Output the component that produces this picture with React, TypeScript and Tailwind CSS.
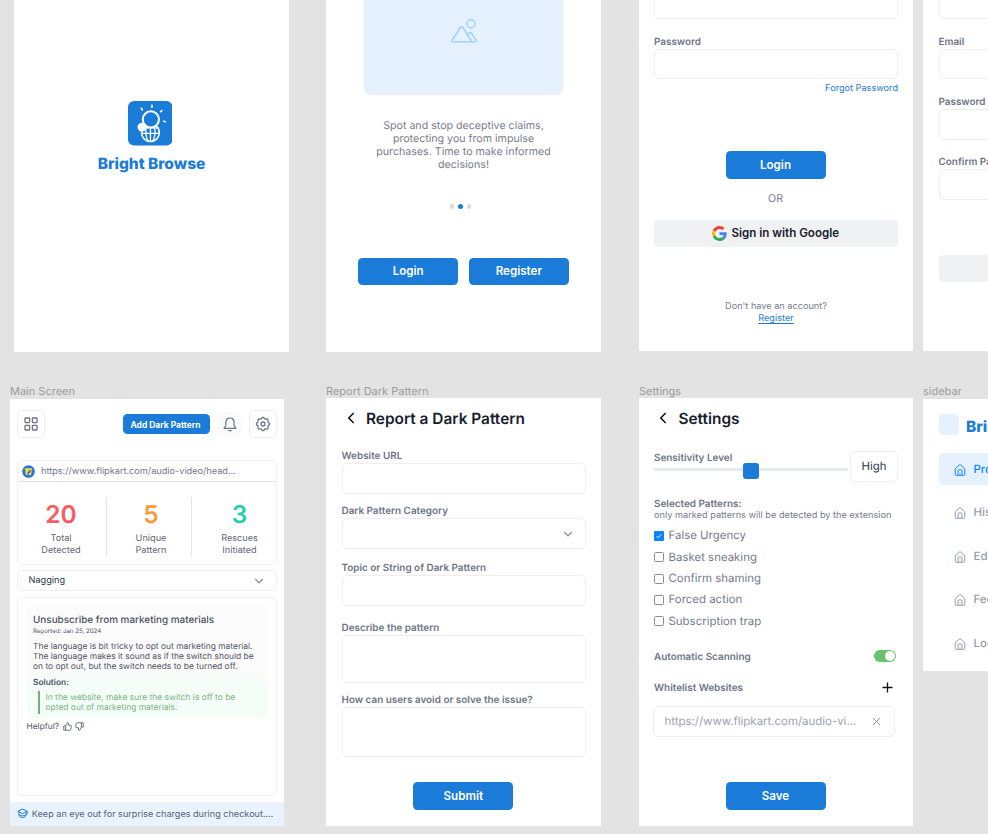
import React from "react";
import type { ReactNode } from "react";

function Title({ children }: { children: ReactNode }) {
  return <div className="h-[14px] whitespace-nowrap text-[11px] leading-[15px] text-[#9b9b9b]">{children}</div>;
}

function Label({ children, className = "" }: { children: ReactNode; className?: string }) {
  return (
    <div className={`h-3 shrink-0 whitespace-nowrap text-[9.92px] leading-[14px] font-semibold text-[#6e7585] ${className}`}>
      {children}
    </div>
  );
}

function Field({ className = "h-[30px]", children }: { className?: string; children?: ReactNode }) {
  return <div className={`shrink-0 rounded-[5px] border border-[#eeeef0] bg-white ${className}`}>{children}</div>;
}

function Button({ children, className = "" }: { children: ReactNode; className?: string }) {
  return (
    <button
      className={`flex h-[27.5px] w-[100px] shrink-0 items-center justify-center rounded-[4.5px] bg-[#1a7bd9] pt-px text-[11.6px] font-semibold text-white ${className}`}
    >
      {children}
    </button>
  );
}

function Logo() {
  return (
    <svg viewBox="0 0 44 44" className="mr-[3px] h-[44.5px] w-[44.5px]" fill="none" stroke="#fff">
      <rect width="44" height="44" rx="6" fill="#1a7bd9" stroke="none" />
      <g strokeWidth="1.6" strokeLinecap="round">
        <path d="M23.7 4.2v2" />
        <path d="M13.2 7.2l.9 1.5" />
        <path d="M32.3 10.6l1.2-1.1" />
        <path d="M35.2 20.1l1.6.4" />
      </g>
      <circle cx="22.2" cy="31.2" r="8.8" strokeWidth="1.6" />
      <path d="M14 26.6h16.500M13.500 32h17.400M22.200 26v14M18.400 25c-1.300 5-1 10.500 1.600 14.600M26 25c1.300 5 1 10.500-1.600 14.600" strokeWidth="1.3" />
      <circle cx="22.600" cy="18.200" r="8" fill="#1a7bd9" strokeWidth="2" />
      <circle cx="13.700" cy="25.800" r="4.300" fill="#fff" stroke="none" />
    </svg>
  );
}

function PictureIcon() {
  return (
    <svg viewBox="0 0 26 24" className="h-6 w-[26px]" fill="none" stroke="#9bd0ff" strokeWidth="1.400" strokeLinejoin="round">
      <circle cx="20" cy="4.700" r="4" />
      <path d="M1.200 21.200 9.300 8.500c.7-1.100 2-1.100 2.700 0L20.700 22.600M1.200 21.200c-.5.900 0 1.600.9 1.600h21.600c1.200 0 1.700-.9 1.100-1.800l-4.300-6.900c-.6-1-1.900-1-2.500 0l-1 1.700" />
    </svg>
  );
}

function GoogleIcon() {
  return (
    <svg viewBox="0 0 48 48" className="-mt-px h-[15px] w-[15px]">
      <path fill="#EA4335" d="M24 9.500c3.540 0 6.710 1.220 9.210 3.600l6.850-6.850C35.900 2.380 30.470 0 24 0 14.620 0 6.510 5.380 2.560 13.220l7.980 6.190C12.430 13.720 17.740 9.500 24 9.500z" />
      <path fill="#4285F4" d="M46.980 24.550c0-1.570-.15-3.090-.38-4.550H24v9.020h12.940c-.58 2.960-2.260 5.480-4.780 7.180l7.730 6c4.510-4.180 7.090-10.360 7.090-17.650z" />
      <path fill="#FBBC05" d="M10.530 28.590c-.48-1.450-.76-2.990-.76-4.590s.27-3.140.76-4.590l-7.980-6.190C.92 16.460 0 20.120 0 24c0 3.880.92 7.540 2.560 10.780l7.970-6.190z" />
      <path fill="#34A853" d="M24 48c6.480 0 11.930-2.130 15.890-5.810l-7.730-6c-2.150 1.450-4.920 2.300-8.160 2.300-6.260 0-11.570-4.220-13.470-9.910l-7.980 6.190C6.510 42.620 14.620 48 24 48z" />
    </svg>
  );
}

function GridIcon() {
  return (
    <svg viewBox="0 0 14 14" className="h-[14px] w-[14px]" fill="none" stroke="#6c7484" strokeWidth="1.300">
      <rect x="1" y="1" width="4.600" height="4.600" rx=".5" />
      <rect x="8.400" y="1" width="4.600" height="4.600" rx=".5" />
      <rect x="1" y="8.400" width="4.600" height="4.600" rx=".5" />
      <rect x="8.400" y="8.400" width="4.600" height="4.600" rx=".5" />
    </svg>
  );
}

function BellIcon() {
  return (
    <svg viewBox="0 0 14 15" className="h-[15px] w-[14px]" fill="none" stroke="#6c7484" strokeWidth="1.200" strokeLinejoin="round" strokeLinecap="round">
      <path d="M7 1C4.500 1 2.900 2.900 2.900 5.200v2.700c0 .7-.3 1.200-.7 1.700L1 11.300h12l-1.200-1.700c-.4-.5-.7-1-.7-1.700V5.200C11.100 2.900 9.500 1 7 1z" />
      <path d="M5.800 13.600h2.400" />
    </svg>
  );
}

// Outline of a gear with eight rounded teeth, centred in a 24 unit box.
const gearPath =
  Array.from({ length: 96 }, (_, i) => {
    const a = (i / 96) * Math.PI * 2;
    const r = 9 + 1 * Math.tanh(1.8 * Math.cos(8 * a));
    return `${i ? "L" : "M"}${(12 + r * Math.cos(a)).toFixed(2)} ${(12 + r * Math.sin(a)).toFixed(2)}`;
  }).join("") + "z";

function GearIcon() {
  return (
    <svg viewBox="0 0 24 24" className="h-[16px] w-[16px]" fill="none" stroke="#6c7484" strokeWidth="1.900" strokeLinejoin="round">
      <path d={gearPath} />
      <circle cx="12" cy="12" r="3" />
    </svg>
  );
}

function StoreIcon() {
  return (
    <svg viewBox="0 0 13 13" className="h-[13px] w-[13px]">
      <circle cx="6.500" cy="6.500" r="6.300" fill="#2a70e8" />
      <path d="M3 3.200h6.900l-.7 6.700H3.800z" fill="#f7df2b" />
      <path d="M6 9.900c.2-2.700.8-4.200 2.900-4.300M5.400 7.700h2.600" stroke="#2668bd" strokeWidth="1.100" fill="none" />
    </svg>
  );
}

function ChevronDown() {
  return (
    <svg viewBox="0 0 10 6" className="h-[6px] w-[10px]" fill="none" stroke="#8b93a3" strokeWidth="1.300">
      <path d="M1.200 1 5 4.800 8.800 1" />
    </svg>
  );
}

function BackIcon() {
  return (
    <svg viewBox="0 0 8 12" className="h-3 w-2" fill="none" stroke="#111" strokeWidth="1.500">
      <path d="M6.700 1 1.700 6l5 5" />
    </svg>
  );
}

function ThumbIcon({ down = false }: { down?: boolean }) {
  return (
    <svg viewBox="0 0 24 24" className={`h-[9px] w-[9px] ${down ? "-scale-100" : ""}`} fill="none" stroke="#5b6070" strokeWidth="2.300" strokeLinejoin="round">
      <path d="M2 10.500h5V22H2zM7 10.500l4.500-9C13.500 1.500 15 3 15 5v4h5.500c1.300 0 2 1 1.800 2.200L20.800 20c-.2 1.200-1.100 2-2.300 2H7" />
    </svg>
  );
}

function CapIcon() {
  return (
    <svg viewBox="0 0 11 11" className="-mt-px h-[11px] w-[11px]" fill="none" stroke="#1a7bd9" strokeWidth="1" strokeLinejoin="round">
      <path d="M5.500 1 .8 3.300l4.700 2.400 4.700-2.400zM2 4.300v3.500c1 1.200 2.100 1.800 3.500 1.800S8 9 9 7.800V4.300M2.500 7c2 1.200 4 1.200 6 0M10.200 3.300v3" />
    </svg>
  );
}

function HomeIcon() {
  return (
    <svg viewBox="0 0 12 12" className="h-3 w-3 shrink-0" fill="none" stroke="currentColor" strokeWidth="1" strokeLinejoin="round">
      <path d="M1.200 4.900 5.100 1.100c.5-.4 1.300-.4 1.800 0l3.900 3.800v5.400c0 .6-.4 1-1 1H2.200c-.6 0-1-.4-1-1z" />
      <path d="M4 11.300V6.400c0-.3.200-.5.500-.5h3c.3 0 .5.200.5.500v4.900" />
      <path d="M6 8v3" strokeWidth=".6" opacity=".6" />
    </svg>
  );
}

function SplashScreen() {
  return (
    <section className="flex h-[351.500px] w-[275px] shrink-0 flex-col items-center bg-white pt-[101px]">
      <Logo />
      <h1 className="mt-[8.300px] h-5 text-[15.500px] leading-5 font-extrabold text-[#1a7bd9]">Bright Browse</h1>
    </section>
  );
}

function OnboardingScreen() {
  return (
    <section className="ml-[37px] flex h-[351.500px] w-[275px] shrink-0 flex-col items-center bg-white">
      <div className="flex h-[95px] w-[198.500px] shrink-0 justify-center rounded-b-[6px] bg-[#e5f1ff] pt-[18.500px]">
        <PictureIcon />
      </div>
      <p className="mt-[25px] text-center text-[10.650px] leading-[12.940px] whitespace-nowrap text-[#767c89]">
        Spot and stop deceptive claims,<br />protecting you from impulse<br />purchases. Time to make informed<br />decisions!
      </p>
      <div className="mt-[32.700px] mr-[6px] flex gap-[4px]">
        <i className="size-[4.500px] rounded-full bg-[#d9d9d9]" />
        <i className="size-[4.500px] rounded-full bg-[#1a7bd9]" />
        <i className="size-[4.500px] rounded-full bg-[#d9d9d9]" />
      </div>
      <div className="mt-[49px] flex gap-[10.700px]">
        <Button>Login</Button>
        <Button>Register</Button>
      </div>
    </section>
  );
}

function LoginScreen() {
  return (
    <section className="ml-[38px] flex h-[351px] w-[274px] shrink-0 flex-col bg-white pr-4 pl-[15px]">
      <Field className="h-[19px] w-[244px] rounded-t-none border-t-0" />
      <Label className="mt-[15.500px]">Password</Label>
      <Field className="mt-[2.500px] h-[30px] w-[244px]" />
      <a className="mt-[3px] h-3 w-[244px] text-right text-[9.160px] leading-[14px] text-[#1a7bd9]">Forgot Password</a>
      <Button className="mt-[57px] self-center">Login</Button>
      <div className="mt-[13px] h-[14px] text-center text-[10.690px] leading-[14px] text-[#767c89]">OR</div>
      <button className="mt-[14.500px] flex h-[27px] w-[244px] items-center justify-center gap-[4.500px] rounded-[4.500px] bg-[#f0f1f3] pt-px pr-px text-[11.600px] font-semibold text-[#171c2e]">
        <GoogleIcon />
        Sign in with Google
      </button>
      <p className="mt-[54px] w-[244px] text-center text-[9.160px] leading-[11.500px] text-[#767c89]">
        Don't have an account?<br />
        <a className="text-[#1a7bd9] underline underline-offset-[1.500px]">Register</a>
      </p>
    </section>
  );
}

function RegisterScreen() {
  return (
    <section className="ml-[10px] flex h-[351px] w-[275px] shrink-0 flex-col bg-white pl-[15.500px]">
      <Field className="h-[19px] w-[244px] rounded-t-none border-t-0" />
      <Label className="mt-[15.500px]">Email</Label>
      <Field className="mt-[2.500px] h-[30px] w-[244px]" />
      <Label className="mt-4">Password</Label>
      <Field className="mt-[2px] h-[31px] w-[244px]" />
      <Label className="mt-[15px]">Confirm Password</Label>
      <Field className="mt-[2px] h-[31px] w-[244px]" />
      <div className="mt-[55px] h-[27px] w-[244px] rounded-[4.500px] bg-[#f0f1f3]" />
    </section>
  );
}

function Stat({ value, color, width, lines }: { value: string; color: string; width: string; lines: [string, string] }) {
  return (
    <div className={`flex flex-col items-center text-[9.160px] leading-[11.600px] text-[#5f6675] ${width}`}>
      <div className={`mt-[3.500px] h-7 text-[24.430px] leading-7 font-semibold ${color}`}>{value}</div>
      <div className="mt-[5.300px] text-center">
        {lines[0]}<br />{lines[1]}
      </div>
    </div>
  );
}

function MainScreen() {
  return (
    <div className="w-[274px] shrink-0">
      <Title>Main Screen</Title>
      <section className="mt-px flex h-[427px] flex-col bg-white">
        <div className="flex h-[50px] items-center pl-[7px]">
          <Field className="flex size-7 items-center justify-center"><GridIcon /></Field>
          <button className="ml-[77.500px] h-[20.500px] w-[87px] shrink-0 rounded-[4.500px] bg-[#1a7bd9] pr-px text-center text-[8.450px] leading-[22px] font-bold whitespace-nowrap text-white">
            Add Dark Pattern
          </button>
          <div className="ml-[6.500px] flex size-[27px] shrink-0 items-center justify-center rounded-full bg-[#fafafb]"><BellIcon /></div>
          <Field className="ml-[6px] flex size-7 items-center justify-center"><GearIcon /></Field>
        </div>
        <div className="mx-[7px] mt-[11px] h-[105px] shrink-0 rounded-[5px] border border-[#f0f0f2]">
          <div className="flex h-[21px] items-center border-b border-[#e4e4e7] pl-[4px] text-[9.160px] text-[#71798a]">
            <StoreIcon />
            <span className="ml-[6px] pt-[1.500px]">https://www.flipkart.com/audio-video/head...</span>
          </div>
          <div className="mt-[14.500px] flex h-[59px]">
            <Stat value="20" color="text-[#fb5b5f]" width="w-[88px] pr-[2px]" lines={["Total", "Detected"]} />
            <i className="w-px bg-[#e4e4e7]" />
            <Stat value="5" color="text-[#fd9a3a]" width="w-[84px] pl-[4px]" lines={["Unique", "Pattern"]} />
            <i className="w-px bg-[#e4e4e7]" />
            <Stat value="3" color="text-[#25cfac]" width="w-[84px] pl-[11px]" lines={["Rescues", "Initiated"]} />
          </div>
        </div>
        <Field className="mx-[7px] mt-[5px] flex h-[21px] items-center justify-between pr-[12px] pl-[10.500px] text-[9.160px] text-[#30374a]">
          Nagging
          <ChevronDown />
        </Field>
        <div className="mx-[7px] mt-[6px] h-[199px] shrink-0 rounded-[5px] border border-[#f0f0f2] pt-[8px] pl-[8.500px]">
          <article className="h-[112px] w-[241.500px] rounded-[5px] bg-linear-to-b from-[#fbfbfc] from-60% to-[#f4fdf8] to-68% pl-[6.500px] whitespace-nowrap text-[#4d5263]">
            <h2 className="pt-[8px] text-[9.920px] leading-3 font-medium">Unsubscribe from marketing materials</h2>
            <div className="mt-[2px] text-[6.110px] leading-2">Reported: Jan 25, 2024</div>
            <p className="mt-[6px] text-[8.430px] leading-[10px]">
              The language is bit tricky to opt out marketing material.<br />The language makes it sound as if the switch should be<br />on to opt out, but the switch needs to be turned off.
            </p>
            <h3 className="mt-[6px] text-[8.400px] leading-[10px] font-semibold">Solution:</h3>
            <blockquote className="mt-[3px] ml-[4.500px] border-l-2 border-[#6cb577] pt-[1.500px] pb-px pl-[6px] text-[8.450px] leading-[10px] text-[#78b47f]">
              In the website, make sure the switch is off to be<br />opted out of marketing materials.
            </blockquote>
          </article>
          <div className="mt-[3px] flex h-[11px] items-center text-[8.400px] text-[#4d5263]">
            <span className="pt-px">Helpful?</span>
            <span className="ml-[4px] flex gap-[3px]"><ThumbIcon /><ThumbIcon down /></span>
          </div>
        </div>
        <footer className="mt-auto flex h-[24.500px] shrink-0 items-center bg-[#e8f3ff] pt-px pl-[6.500px] text-[9.100px] whitespace-nowrap text-[#596174]">
          <CapIcon />
          <span className="ml-[4.300px] pt-px">Keep an eye out for surprise charges during checkout....</span>
        </footer>
      </section>
    </div>
  );
}

function Heading({ children }: { children: ReactNode }) {
  return (
    <div className="mt-[10px] ml-[5px] flex h-5 shrink-0 items-center gap-[11.500px] text-[15.400px] font-semibold text-[#171c2e]">
      <BackIcon />
      <span className="pt-[1px]">{children}</span>
    </div>
  );
}

function ReportScreen() {
  return (
    <div className="ml-[42px] w-[275px] shrink-0">
      <Title>Report Dark Pattern</Title>
      <section className="flex h-[428px] flex-col bg-white px-[15.500px]">
        <Heading>Report a Dark Pattern</Heading>
        <Label className="mt-[21px]">Website URL</Label>
        <Field className="mt-[2px] h-[31px]" />
        <Label className="mt-[10px]">Dark Pattern Category</Label>
        <Field className="mt-[2px] flex h-[31px] items-center justify-end pr-[12px]"><ChevronDown /></Field>
        <Label className="mt-[12px]">Topic or String of Dark Pattern</Label>
        <Field className="mt-[2px] h-[31px]" />
        <Label className="mt-[15px]">Describe the pattern</Label>
        <Field className="mt-[2px] h-[48px]" />
        <Label className="mt-[10px]">How can users avoid or solve the issue?</Label>
        <Field className="mt-[2px] h-[50px]" />
        <Button className="mt-[25.400px] mr-[.4px] self-center">Submit</Button>
      </section>
    </div>
  );
}

const patterns = ["False Urgency", "Basket sneaking", "Confirm shaming", "Forced action", "Subscription trap"];

function SettingsScreen() {
  return (
    <div className="ml-[38px] w-[274px] shrink-0">
      <Title>Settings</Title>
      <section className="flex h-[428px] flex-col bg-white pr-4 pl-[15px]">
        <Heading>Settings</Heading>
        <div className="mt-[23px] flex h-[31px] shrink-0">
          <div className="w-[194px] shrink-0">
            <Label>Sensitivity Level</Label>
            <div className="flex h-[15.500px] items-center bg-linear-to-r from-[#e9ebed] to-[#e9ebed] bg-size-[100%_3px] bg-position-[0_5px] bg-no-repeat">
              <i className="ml-[89px] size-[15.500px] rounded-[3px] bg-[#1a7bd9]" />
            </div>
          </div>
          <Field className="ml-[2px] h-[31px] w-[48px] text-center text-[11.450px] leading-[29px] text-[#30374a]">High</Field>
        </div>
        <Label className="mt-[14.500px]">Selected Patterns:</Label>
        <p className="h-3 text-[9.200px] leading-[14px] whitespace-nowrap text-[#767c89]">only marked patterns will be detected by the extension</p>
        <ul className="mt-[4.700px]">
          {patterns.map((name, i) => (
            <li key={name} className="flex h-[21.400px] items-center gap-[4.500px] text-[11.450px] text-[#767c89]">
              {i === 0 ? (
                <svg viewBox="0 0 10 10" className="size-[10px]">
                  <rect width="10" height="10" rx="1" fill="#0a84ff" />
                  <path d="M2.600 5.100l1.600 1.600L7.400 3.500" fill="none" stroke="#fff" />
                </svg>
              ) : (
                <i className="size-[10px] rounded-[1.500px] border border-[#868c99]" />
              )}
              {name}
            </li>
          ))}
        </ul>
        <div className="mt-[18.300px] flex h-[12px] items-center justify-between pr-[1px]">
          <Label>Automatic Scanning</Label>
          <span className="flex h-[12px] w-[22px] items-center justify-end rounded-full bg-[#68c36c] pr-px"><i className="size-[10px] rounded-full bg-white" /></span>
        </div>
        <div className="mt-[19px] flex h-3 items-center justify-between pr-[4px]">
          <Label>Whitelist Websites</Label>
          <svg viewBox="0 0 11 11" className="size-[11px]" stroke="#111" strokeWidth="1.300"><path d="M5.500.5v10M.5 5.500h10" /></svg>
        </div>
        <Field className="mt-[12.500px] -ml-[1px] flex h-[31px] w-[242px] items-center justify-between pr-[13.500px] pl-[10.500px] text-[11.450px] text-[#9ca2ae]">
          https://www.flipkart.com/audio-vi...
          <svg viewBox="0 0 9 9" className="size-[9px]" stroke="#8b93a3" strokeWidth="1"><path d="M1 1l7 7M8 1L1 8" /></svg>
        </Field>
        <Button className="mt-auto mb-[16.200px] self-center">Save</Button>
      </section>
    </div>
  );
}

const links = ["Profile", "History", "Edit", "Feedback", "Logout"];

function Sidebar() {
  return (
    <div className="ml-[10px] w-[275px] shrink-0">
      <Title>sidebar</Title>
      <section className="mt-px h-[272px] bg-white pt-[15.500px] pl-[15.500px]">
        <div className="flex h-5 items-center">
          <i className="size-[20.500px] shrink-0 rounded-[4px] bg-[#e5f1ff]" />
          <b className="mt-[4px] ml-[7px] text-[15.500px] font-extrabold whitespace-nowrap text-[#1a7bd9]">Bright Browse</b>
        </div>
        <nav className="mt-[18.500px] flex flex-col gap-[11.500px]">
          {links.map((name, i) => (
            <a
              key={name}
              className={`flex h-8 w-[244px] items-center gap-[7.500px] rounded-[4.500px] pt-px pl-[15.500px] text-[11.450px] font-medium ${i === 0 ? "bg-[#e5f1ff] text-[#0a84ff]" : "text-[#959dab]"}`}
            >
              <HomeIcon />
              {name}
            </a>
          ))}
        </nav>
      </section>
    </div>
  );
}

export default function App() {
  return (
    <main className="h-[834px] w-[988px] overflow-hidden bg-[#e3e3e3] font-[Inter,sans-serif] [text-rendering:geometricPrecision]">
      <div className="flex h-[384px] items-start pl-[14px]">
        <SplashScreen />
        <OnboardingScreen />
        <LoginScreen />
        <RegisterScreen />
      </div>
      <div className="flex items-start pl-[10px]">
        <MainScreen />
        <ReportScreen />
        <SettingsScreen />
        <Sidebar />
      </div>
    </main>
  );
}
